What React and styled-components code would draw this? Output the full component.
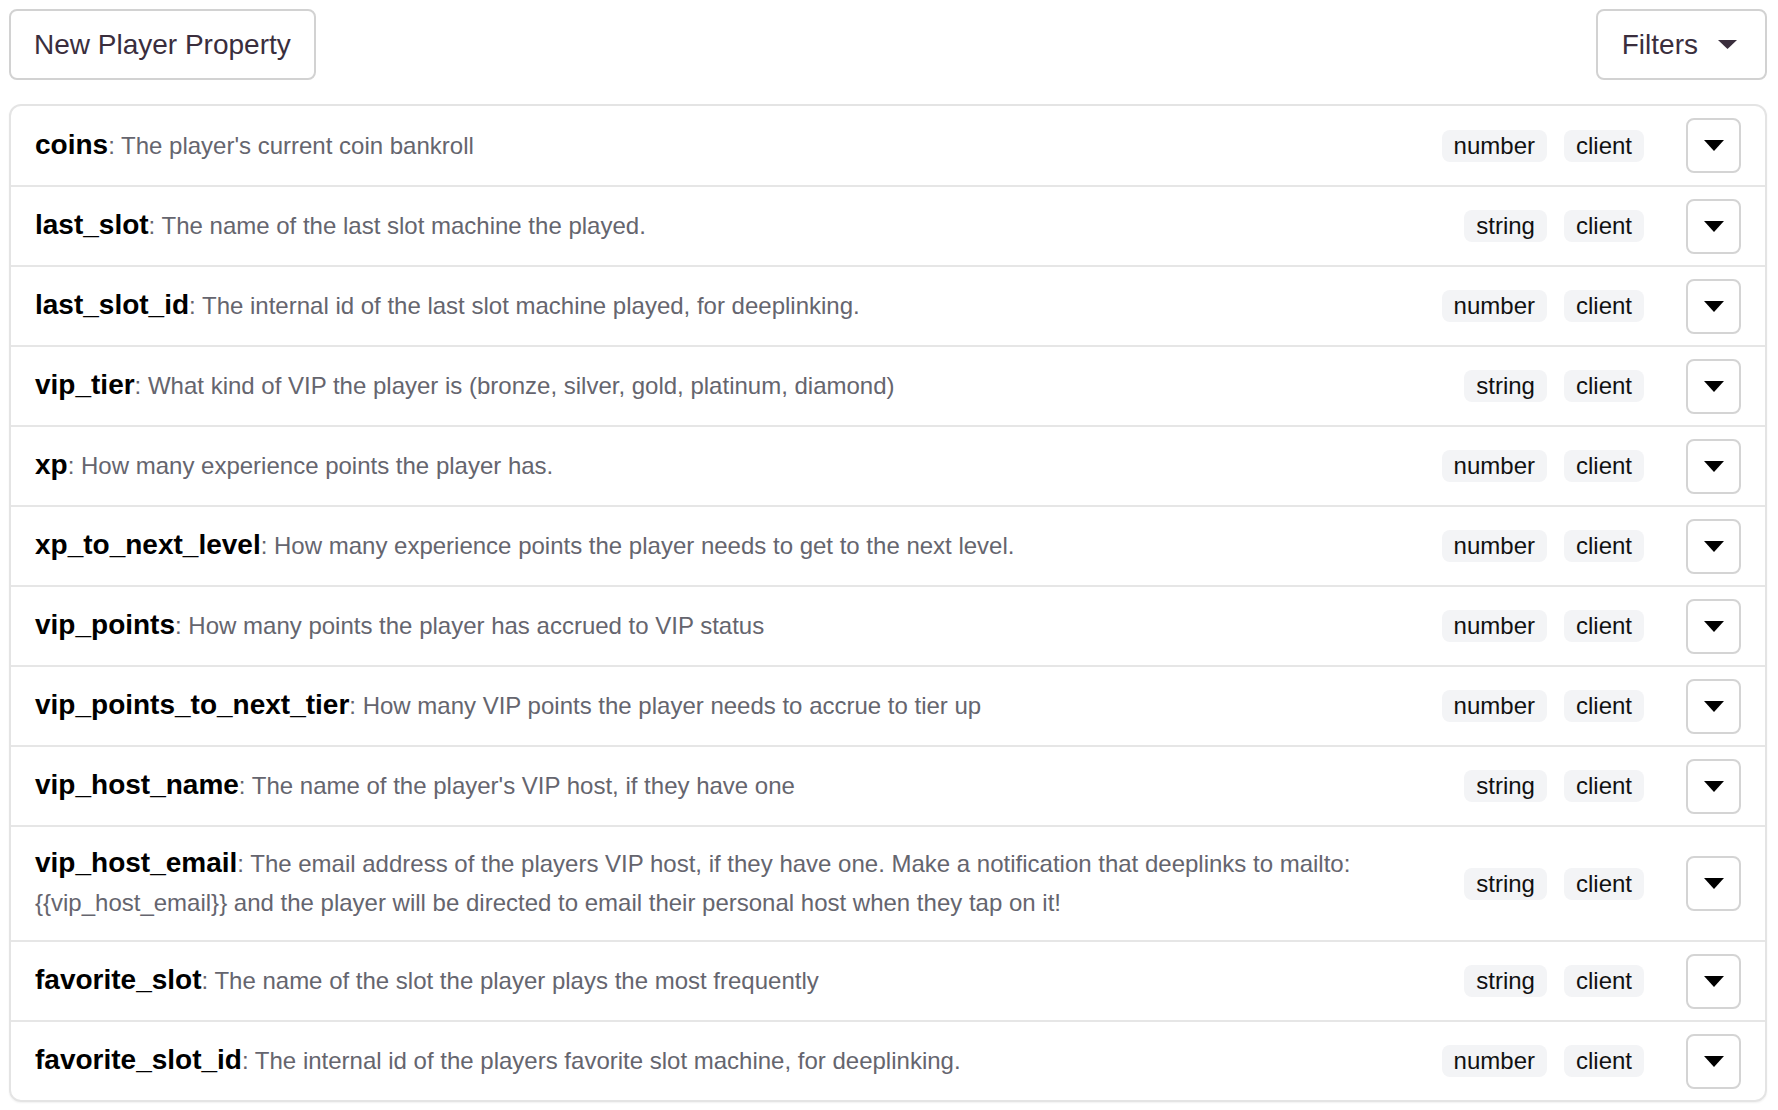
import React from "react";
import styled, { createGlobalStyle } from "styled-components";

const GlobalStyle = createGlobalStyle`
  html, body { margin: 0; padding: 0; background: #ffffff; }
  body { font-family: "Liberation Sans", Arial, Helvetica, sans-serif; }
  * { box-sizing: border-box; }
`;

const Page = styled.div`
  padding: 9px 11px 9px 9px;
`;

const Header = styled.div`
  display: flex;
  justify-content: space-between;
  align-items: center;
  margin-bottom: 24px;
`;

const HeaderButton = styled.button`
  height: 71px;
  display: flex;
  align-items: center;
  gap: 20px;
  padding: ${(p) => p.$padding || "0 23px"};
  background: #ffffff;
  border: 2px solid #d2d2d2;
  border-radius: 8px;
  font-family: "Liberation Sans", Arial, sans-serif;
  font-size: 28px;
  color: #3a2e3d;
  cursor: pointer;
`;

const Card = styled.div`
  border: 2px solid #e4e4e4;
  border-radius: 12px;
  box-shadow: 0 1px 2px rgba(0, 0, 0, 0.06);
  overflow: hidden;
`;

const Row = styled.div`
  display: flex;
  align-items: center;
  min-height: 79px;
  padding: 0 24px;
  & + & {
    min-height: 80px;
    border-top: 2px solid #e6e6e6;
  }
`;

const Text = styled.div`
  flex: 1;
  min-width: 0;
  padding: 16px 24px 18px 0;
  line-height: 39px;
  font-size: 24px;
  color: #65656e;
`;

const Name = styled.span`
  font-size: 28px;
  font-weight: 700;
  color: #000000;
`;

const Tags = styled.div`
  display: flex;
  gap: 17px;
  flex-shrink: 0;
`;

const Tag = styled.span`
  display: inline-block;
  padding: 2px 12px;
  line-height: 28px;
  font-size: 24px;
  color: #111111;
  background: #f3f4f6;
  border-radius: 8px;
`;

const ToggleButton = styled.button`
  width: 55px;
  height: 55px;
  margin-left: 42px;
  flex-shrink: 0;
  display: flex;
  align-items: center;
  justify-content: center;
  background: #ffffff;
  border: 2px solid #d4d4d4;
  border-radius: 8px;
  padding: 0;
  cursor: pointer;
`;

const Caret = ({ w, h, color }) => (
  <svg width={w} height={h} viewBox={`0 0 ${w} ${h}`}>
    <polygon points={`0,0 ${w},0 ${w / 2},${h}`} fill={color} />
  </svg>
);

const properties = [
  { name: "coins", desc: "The player's current coin bankroll", type: "number" },
  { name: "last_slot", desc: "The name of the last slot machine the played.", type: "string" },
  { name: "last_slot_id", desc: "The internal id of the last slot machine played, for deeplinking.", type: "number" },
  { name: "vip_tier", desc: "What kind of VIP the player is (bronze, silver, gold, platinum, diamond)", type: "string" },
  { name: "xp", desc: "How many experience points the player has.", type: "number" },
  { name: "xp_to_next_level", desc: "How many experience points the player needs to get to the next level.", type: "number" },
  { name: "vip_points", desc: "How many points the player has accrued to VIP status", type: "number" },
  { name: "vip_points_to_next_tier", desc: "How many VIP points the player needs to accrue to tier up", type: "number" },
  { name: "vip_host_name", desc: "The name of the player's VIP host, if they have one", type: "string" },
  {
    name: "vip_host_email",
    desc: "The email address of the players VIP host, if they have one. Make a notification that deeplinks to mailto: {{vip_host_email}} and the player will be directed to email their personal host when they tap on it!",
    type: "string",
  },
  { name: "favorite_slot", desc: "The name of the slot the player plays the most frequently", type: "string" },
  { name: "favorite_slot_id", desc: "The internal id of the players favorite slot machine, for deeplinking.", type: "number" },
];

export default function App() {
  return (
    <>
      <GlobalStyle />
      <Page>
        <Header>
          <HeaderButton>New Player Property</HeaderButton>
          <HeaderButton $padding="0 28px 0 24px">
            Filters
            <Caret w={19} h={9} color="#3a2e3d" />
          </HeaderButton>
        </Header>
        <Card>
          {properties.map((p) => (
            <Row key={p.name}>
              <Text>
                <Name>{p.name}</Name>: {p.desc}
              </Text>
              <Tags>
                <Tag>{p.type}</Tag>
                <Tag>client</Tag>
              </Tags>
              <ToggleButton aria-label="expand">
                <Caret w={20} h={11} color="#000000" />
              </ToggleButton>
            </Row>
          ))}
        </Card>
      </Page>
    </>
  );
}
